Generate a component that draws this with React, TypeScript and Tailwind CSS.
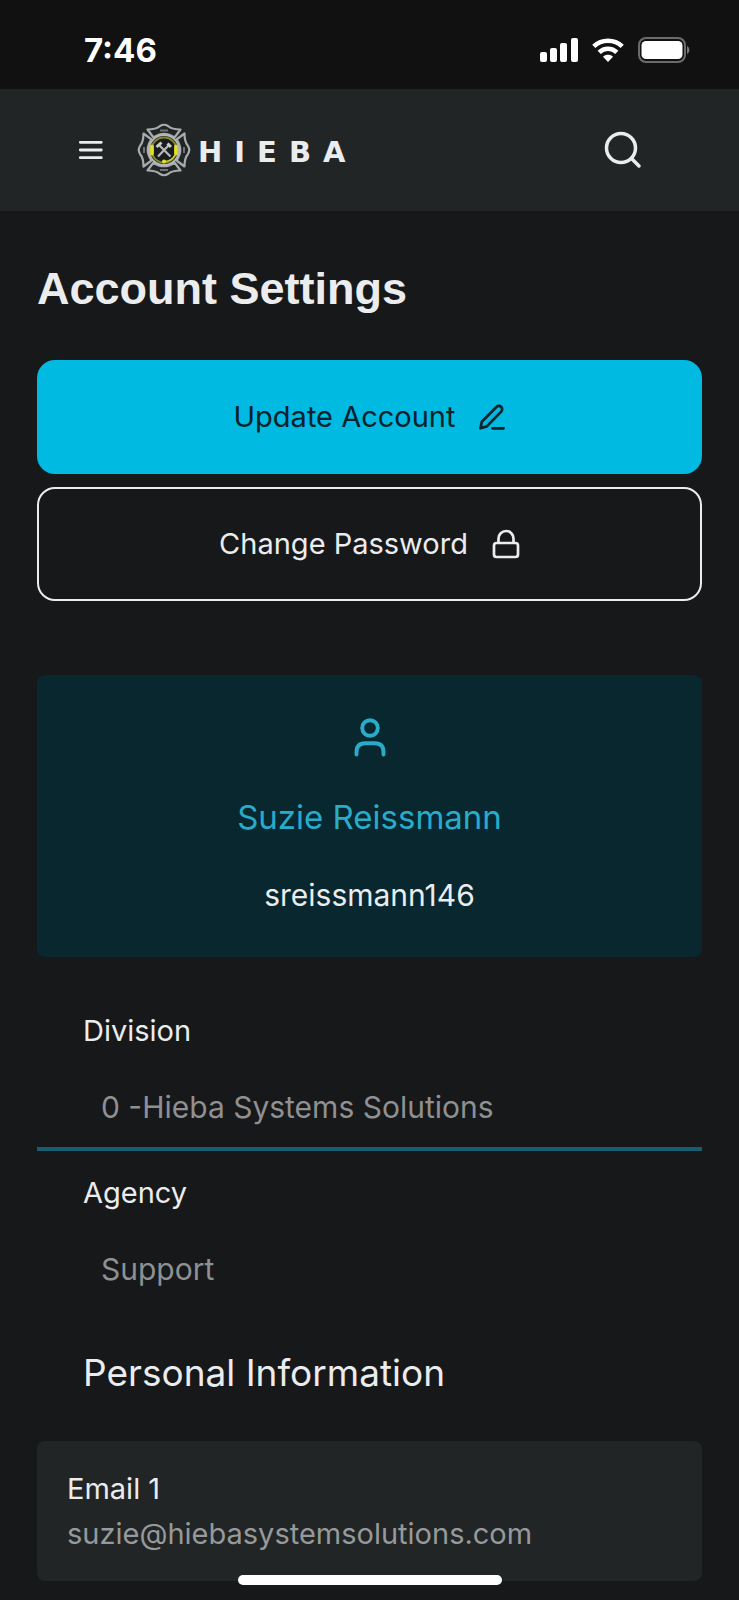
import type { ReactNode } from "react";

const fields = [
  { label: "Division", value: "0 -Hieba Systems Solutions" },
  { label: "Agency", value: "Support" },
];

const contacts = [
  { label: "Email 1", value: "suzie@hiebasystemsolutions.com" },
];

export default function App() {
  return (
    <div className="min-h-screen bg-[#17181a] font-[Inter,'Liberation_Sans',sans-serif] text-[30px] leading-9 text-[#ebecee]">
      <StatusBar />
      <Header />
      <main className="px-[37px] pt-12 pb-[19px]">
        <h1 className="font-['Liberation_Sans',sans-serif] text-[45px] leading-[60px] font-bold">
          Account Settings
        </h1>
        <div className="mt-[41px] grid gap-[13px]">
          <ActionButton
            className="border-[#00bae1] bg-[#00bae1] text-[#08212b]"
            icon={<EditIcon />}
          >
            Update Account
          </ActionButton>
          <ActionButton className="border-[#ebecee]" icon={<LockIcon />}>
            Change Password
          </ActionButton>
        </div>
        <section className="mt-[74px] flex flex-col items-center rounded-lg bg-[#08272f] pt-10 pb-11">
          <UserIcon />
          <h2 className="mt-[38px] text-[33px] leading-10 text-[#29abca]">
            Suzie Reissmann
          </h2>
          <p className="mt-10">sreissmann146</p>
        </section>
        <dl className="mt-8">
          {fields.map((item) => (
            <div
              key={item.label}
              className="border-b-4 border-[#165d72] px-[46px] pt-6 pb-[22px] last:border-0"
            >
              <dt className="text-[29px]">{item.label}</dt>
              <dd className="mt-10 pl-[18px] text-[#8f9092]">{item.value}</dd>
            </div>
          ))}
        </dl>
        <h2 className="mt-10 px-[46px] text-[37px] leading-[48px]">
          Personal Information
        </h2>
        <dl className="mt-11 grid gap-3.5">
          {contacts.map((item) => (
            <div
              key={item.label}
              className="rounded-lg bg-[#212526] px-[30px] py-[25px] text-[29px] leading-[45px]"
            >
              <dt>{item.label}</dt>
              <dd className="text-[#97999a]">{item.value}</dd>
            </div>
          ))}
        </dl>
      </main>
      {/* home indicator */}
      <div className="fixed bottom-[15px] left-1/2 h-2.5 w-[264px] -translate-x-1/2 rounded-full bg-white" />
    </div>
  );
}

// StatusBar
const StatusBar = () => {
  return (
    <div className="flex h-[89px] items-center justify-between bg-[#111] pt-2.5 pr-[49px] pl-[84px] text-white">
      <time className="text-[33px] font-bold">7:46</time>
      <div className="flex items-center gap-3.5">
        <svg width="38" height="24" viewBox="0 0 38 24" fill="currentColor">
          <rect x="0" y="14" width="7" height="10" rx="2" />
          <rect x="10" y="10" width="7" height="14" rx="2" />
          <rect x="20" y="5" width="7" height="19" rx="2" />
          <rect x="31" y="0" width="7" height="24" rx="2" />
        </svg>
        <svg width="32" height="24" viewBox="0 0 32 24" fill="none">
          <path
            d="M1.800 8.400a20.500 20.500 0 0 1 28.400 0M7.200 14.400a12.600 12.600 0 0 1 17.600 0"
            stroke="currentColor"
            strokeWidth="4.600"
          />
          <path
            d="M16 24l-5-5.200c2.800-2.600 7.200-2.600 10 0z"
            fill="currentColor"
          />
        </svg>
        <svg width="52" height="26" viewBox="0 0 52 26">
          <rect
            x="1"
            y="1"
            width="46"
            height="24"
            rx="7"
            fill="none"
            stroke="#6b6b6b"
            strokeWidth="2"
          />
          <rect x="3.500" y="4" width="41" height="18" rx="4.500" fill="#fff" />
          <path d="M49 9v8c3.200-1.400 3.200-6.600 0-8z" fill="#777" />
        </svg>
      </div>
    </div>
  );
};

// Header
const Header = () => {
  return (
    <header className="flex h-[122px] items-center bg-[#212526] pr-[97px] pl-[78px]">
      <button type="button" aria-label="Menu">
        <svg
          width="26"
          height="22"
          viewBox="0 0 26 22"
          stroke="currentColor"
          strokeWidth="2.800"
          strokeLinecap="round"
        >
          <path d="M2.300 3.300h21M2.300 11h21M2.300 18.700h21" />
        </svg>
      </button>
      <a href="#" className="ml-8 flex items-center gap-1.5">
        <Badge />
        <span className="flex gap-3 pt-1 font-['DejaVu_Sans',sans-serif] text-[29px] font-bold">
          {["H", "I", "E", "B", "A"].map((letter) => (
            <span key={letter}>{letter}</span>
          ))}
        </span>
      </a>
      <button type="button" aria-label="Search" className="ml-auto">
        <svg
          width="38"
          height="38"
          viewBox="0 0 38 38"
          fill="none"
          stroke="currentColor"
          strokeWidth="3.500"
          strokeLinecap="round"
        >
          <circle cx="17" cy="17" r="14.500" />
          <path d="M27.500 27.500l7.500 7.500" />
        </svg>
      </button>
    </header>
  );
};

// fire service cross with headset ring and crossed tools
const Badge = () => {
  return (
    <svg width="56" height="56" viewBox="0 0 56 56" fill="none">
      <g stroke="#a9acae" strokeWidth="2.200" strokeLinejoin="round">
        {[0, 90, 180, 270].map((angle) => (
          <path
            key={angle}
            transform={`rotate(${angle} 28 28)`}
            d="M17.500 15.500L11.500 7.500Q20 7.500 24 4Q28 1.500 32 4Q36 7.500 44.500 7.500L38.500 15.500Q28 8 17.500 15.500z"
          />
        ))}
      </g>
      <path
        d="M24 8.500h8M24 48h8M8 25v6M48 25v6"
        stroke="#6f7375"
        strokeWidth="2"
      />
      <circle
        cx="28"
        cy="28"
        r="15"
        fill="#191c1d"
        stroke="#b4b7b8"
        strokeWidth="2"
      />
      <circle cx="28" cy="28" r="12.500" stroke="#85872c" strokeWidth="2" />
      <path
        d="M16 24.500v7M40 24.500v7"
        stroke="#dfe02f"
        strokeWidth="3.800"
        strokeLinecap="round"
      />
      <path d="M39 33q-3 6-10 6.500" stroke="#cfd02e" strokeWidth="1.600" />
      <circle cx="28" cy="39.500" r="2" fill="#dfe02f" />
      <path
        d="M23.500 23.500L34.500 34.500M33 23L22 34.500"
        stroke="#b5b8ba"
        strokeWidth="2.200"
      />
      <path
        d="M20.500 25l5-4.500M31.500 21.500l3.500 3.500"
        stroke="#c9cccd"
        strokeWidth="3"
      />
    </svg>
  );
};

// ActionButton
const ActionButton = ({
  className,
  icon,
  children,
}: {
  className: string;
  icon: ReactNode;
  children: ReactNode;
}) => {
  return (
    <button
      type="button"
      className={`flex h-[114px] w-full items-center justify-center gap-6 rounded-[18px] border-2 text-[29px] ${className}`}
    >
      {children}
      {icon}
    </button>
  );
};

const EditIcon = () => (
  <svg
    width="26"
    height="26"
    viewBox="0 0 26 26"
    fill="none"
    stroke="currentColor"
    strokeWidth="2.700"
    strokeLinecap="round"
    strokeLinejoin="round"
  >
    <path d="M1.500 24.300l1.300-6.500L17.400 3a3.300 3.300 0 0 1 4.800 0a3.300 3.300 0 0 1 0 4.600L7.800 22.400zM13.500 24.300H24.600" />
  </svg>
);

const LockIcon = () => (
  <svg
    width="28"
    height="30"
    viewBox="0 0 28 30"
    fill="none"
    stroke="currentColor"
    strokeWidth="2.700"
  >
    <rect x="2" y="14" width="24" height="14" rx="2.500" />
    <path d="M6.500 14V9.500a7.500 7.500 0 0 1 15 0V14" />
  </svg>
);

const UserIcon = () => (
  <svg
    width="34"
    height="44"
    viewBox="0 0 34 44"
    fill="none"
    stroke="#29abca"
    strokeWidth="3.900"
    strokeLinecap="round"
  >
    <circle cx="17" cy="13" r="7.800" />
    <path d="M3.500 39.500V37q0-8.700 8.700-8.700h9.600q8.700 0 8.700 8.700v2.500" />
  </svg>
);
